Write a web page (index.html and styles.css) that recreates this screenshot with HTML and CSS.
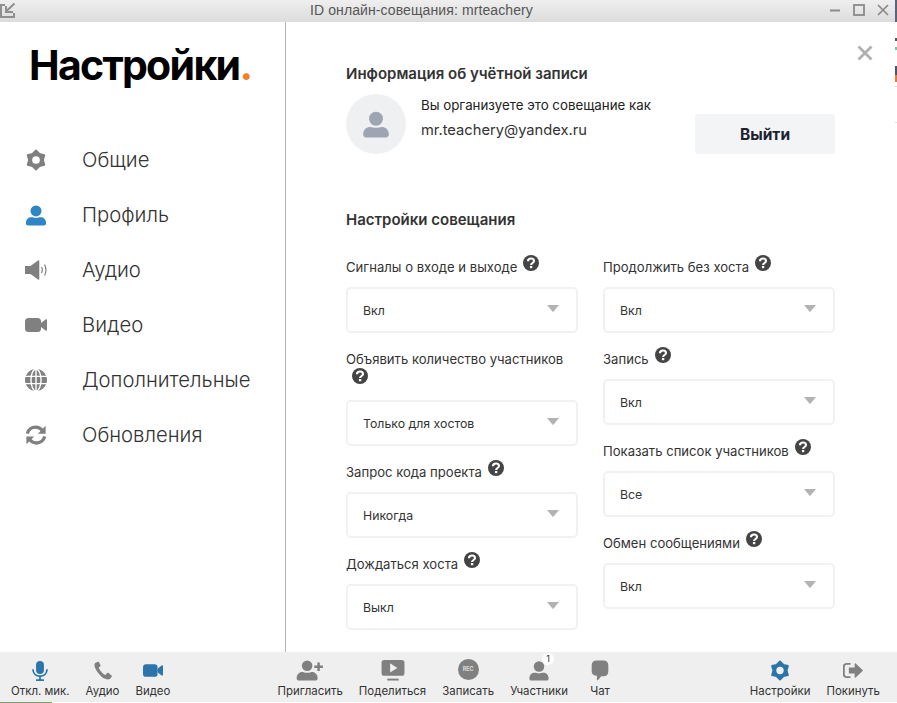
FILE: index.html
```html
<!DOCTYPE html>
<html lang="ru">
<head>
<meta charset="utf-8">
<title>Настройки</title>
<link rel="stylesheet" href="styles.css">
</head>
<body>
<svg class="defs" width="0" height="0" aria-hidden="true">
  <symbol id="i-gear" viewBox="0 0 24 24"><path stroke="currentColor" stroke-width="2" stroke-linejoin="round" fill="currentColor" d="M12 1.500 15.800 5.400 21.090 6.750 19.600 12 21.090 17.250 15.800 18.600 12 22.500 8.200 18.600 2.910 17.250 4.400 12 2.910 6.750 8.200 5.400Z"/><circle cx="12" cy="12" r="4.200" fill="var(--hole,#fff)"/></symbol>
  <symbol id="i-person" viewBox="0 0 24 24"><circle cx="12" cy="7.500" r="6" fill="currentColor"/><path fill="currentColor" d="M1 21c0-4.500 3-6.500 6-6.500 1.500 0 3 .8 5 .8s3.500-.8 5-.8c3 0 6 2 6 6.500 0 1.500-1 2.500-2.500 2.500h-17C2 23.500 1 22.500 1 21Z"/></symbol>
  <symbol id="i-audio" viewBox="0 0 22 20"><path fill="currentColor" d="M0 6h5.500l7.500-5.500c.6-.5 1.300 0 1.300.6v17.800c0 .6-.7 1.100-1.300.6L5.500 14H0Z"/><path fill="none" stroke="currentColor" stroke-width="1.200" d="M16.500 7c1 1.800 1 4.200 0 6M19.500 4.500c1.800 3.300 1.800 7.700 0 11"/></symbol>
  <symbol id="i-video" viewBox="0 0 22 16"><rect x="0" y="1" width="16" height="14" rx="3.500" fill="currentColor"/><path fill="currentColor" d="m16 6 4.500-3.500c.6-.4 1.500-.1 1.500.7v9.600c0 .8-.9 1.100-1.500.7L16 10Z"/></symbol>
  <symbol id="i-globe" viewBox="0 0 24 24"><circle cx="12" cy="12" r="12" fill="currentColor"/><g fill="none" stroke="#fff" stroke-width="1.500"><path d="M0 8h24M0 16h24M12 0v24"/><ellipse cx="12" cy="12" rx="5.500" ry="12"/></g></symbol>
  <symbol id="i-sync" viewBox="0 0 24 24"><g fill="none" stroke="currentColor" stroke-width="3.600"><path d="M2.500 10.500C3.500 6 7.500 3.300 11.500 3.300c3 0 5.500 1.200 7.500 3.700"/><path d="M21.500 13.500c-1 4.500-5 7.200-9 7.200-3 0-5.500-1.200-7.500-3.700"/></g><path fill="currentColor" d="M22.500 2v8.500H14ZM1.500 22v-8.500H10Z"/></symbol>
  <symbol id="i-help" viewBox="0 0 16 16"><circle cx="8" cy="8" r="8" fill="#444"/><path fill="none" stroke="#fff" stroke-width="2.100" d="M5 6.200C5 4.500 6.300 3.500 8 3.500s3 1 3 2.500c0 2-2.900 2-2.900 4"/><rect x="6.900" y="11" width="2.400" height="2.200" fill="#fff"/></symbol>
  <symbol id="i-caret" viewBox="0 0 12 7"><path fill="currentColor" d="M0 0h12L6.600 6.400c-.3.400-.9.400-1.200 0Z"/></symbol>
</svg>

<div class="app">
  <header class="titlebar">
    <svg class="tb-restore" viewBox="0 0 16 16" width="16" height="16"><path fill="none" stroke="#8f8f8f" stroke-width="2" d="M5 3H1v12h13v-4M14.500 1.500 6 9.500M6 4v6h7"/></svg>
    <span class="tb-title">ID онлайн-совещания: mrteachery</span>
    <div class="tb-controls">
      <svg viewBox="0 0 12 12" width="12" height="12"><path stroke="#8a8a8a" stroke-width="2" d="M1 6.500h10"/></svg>
      <svg viewBox="0 0 12 12" width="12" height="12"><rect x="1" y="1" width="10" height="10" fill="none" stroke="#8a8a8a" stroke-width="1.800"/></svg>
      <svg viewBox="0 0 12 12" width="12" height="12"><path stroke="#8a8a8a" stroke-width="1.700" d="M1 1l10 10M11 1 1 11"/></svg>
    </div>
  </header>

  <div class="main">
    <aside class="sidebar">
      <h1 class="heading">Настройки<span class="dot">.</span></h1>
      <nav class="nav">
        <a class="nav-item"><span class="nav-ico"><svg class="ic-20"><use href="#i-gear"/></svg></span>Общие</a>
        <a class="nav-item active"><span class="nav-ico"><svg class="ic-22"><use href="#i-person"/></svg></span>Профиль</a>
        <a class="nav-item"><span class="nav-ico"><svg class="ic-22"><use href="#i-audio"/></svg></span>Аудио</a>
        <a class="nav-item"><span class="nav-ico"><svg class="ic-22"><use href="#i-video"/></svg></span>Видео</a>
        <a class="nav-item"><span class="nav-ico"><svg class="ic-22"><use href="#i-globe"/></svg></span>Дополнительные</a>
        <a class="nav-item"><span class="nav-ico"><svg class="ic-20"><use href="#i-sync"/></svg></span>Обновления</a>
      </nav>
    </aside>

    <section class="content">
      <svg class="close" viewBox="0 0 16 16" width="16" height="16"><path stroke="#b0b0b0" stroke-width="2.800" d="M1.500 1.500l13 13M14.500 1.500l-13 13"/></svg>
      <h2 class="section-title">Информация об учётной записи</h2>
      <div class="account">
        <div class="avatar"><svg class="avatar-ico"><use href="#i-person"/></svg></div>
        <div class="account-text">
          <p class="account-note">Вы организуете это совещание как</p>
          <p class="account-mail">mr.teachery@yandex.ru</p>
        </div>
        <button class="logout">Выйти</button>
      </div>

      <h2 class="section-title meeting-title">Настройки совещания</h2>
      <div class="columns">
        <div class="column">
          <div class="field"><label class="label">Сигналы о входе и выходе<svg class="help"><use href="#i-help"/></svg></label><div class="select"><span>Вкл</span><svg class="caret"><use href="#i-caret"/></svg></div></div>
          <div class="field"><label class="label">Объявить количество участников<svg class="help"><use href="#i-help"/></svg></label><div class="select"><span>Только для хостов</span><svg class="caret"><use href="#i-caret"/></svg></div></div>
          <div class="field"><label class="label">Запрос кода проекта<svg class="help"><use href="#i-help"/></svg></label><div class="select"><span>Никогда</span><svg class="caret"><use href="#i-caret"/></svg></div></div>
          <div class="field"><label class="label">Дождаться хоста<svg class="help"><use href="#i-help"/></svg></label><div class="select"><span>Выкл</span><svg class="caret"><use href="#i-caret"/></svg></div></div>
        </div>
        <div class="column">
          <div class="field"><label class="label">Продолжить без хоста<svg class="help"><use href="#i-help"/></svg></label><div class="select"><span>Вкл</span><svg class="caret"><use href="#i-caret"/></svg></div></div>
          <div class="field"><label class="label">Запись<svg class="help"><use href="#i-help"/></svg></label><div class="select"><span>Вкл</span><svg class="caret"><use href="#i-caret"/></svg></div></div>
          <div class="field"><label class="label">Показать список участников<svg class="help"><use href="#i-help"/></svg></label><div class="select"><span>Все</span><svg class="caret"><use href="#i-caret"/></svg></div></div>
          <div class="field"><label class="label">Обмен сообщениями<svg class="help"><use href="#i-help"/></svg></label><div class="select"><span>Вкл</span><svg class="caret"><use href="#i-caret"/></svg></div></div>
        </div>
      </div>
    </section>
  </div>

  <footer class="toolbar">
    <div class="tool-group">
      <div class="tool blue"><svg class="t-ico" viewBox="0 0 24 24"><rect x="7.500" y="1" width="9" height="15" rx="4.500" fill="currentColor"/><path fill="none" stroke="currentColor" stroke-width="2" d="M4 10.500c0 5 3.500 8 8 8s8-3 8-8M12 18.500V23M7.500 23h9"/></svg><span>Откл. мик.</span></div>
      <div class="tool"><svg class="t-ico" viewBox="0 0 24 24"><path fill="currentColor" d="M6 2 3 3.500C2 4.500 2 6.500 3 9c2.500 5.500 7 10.500 11.500 12.500 2.500 1 4.500 1 5.500 0l2-2.500c.3-.5.200-1-.2-1.300l-3.800-3c-.5-.3-1-.3-1.300.1l-1.700 2c-.3.300-.7.300-1 .1C11 15 8.500 12 7.300 9.300c-.1-.4 0-.7.300-1l1.300-1.300c.3-.3.400-.8.200-1.200L7.300 2.400C7 1.900 6.500 1.800 6 2Z"/></svg><span>Аудио</span></div>
      <div class="tool blue"><svg class="t-ico t-video" viewBox="0 0 22 16"><use href="#i-video"/></svg><span>Видео</span></div>
    </div>
    <div class="tool-group mid">
      <div class="tool"><svg class="t-ico t-invite" viewBox="0 0 28 22"><circle cx="11" cy="6" r="5.500" fill="currentColor"/><path fill="currentColor" d="M0 19c0-4 3-6.500 5.500-6.500 1.500 0 3 .8 5.500.8s4-.8 5.500-.8C19 12.500 22 15 22 19c0 1.500-1 2.500-2.500 2.500h-17C1 21.500 0 20.500 0 19Z"/><path stroke="currentColor" stroke-width="2.600" d="M23 2.500v9M18.500 7h9"/></svg><span>Пригласить</span></div>
      <div class="tool"><svg class="t-ico" viewBox="0 0 24 22"><rect x="0" y="0" width="24" height="16.500" rx="3" fill="currentColor"/><path fill="#efefef" d="M9 3.500 16.500 8.300 9 13Z"/><path stroke="currentColor" stroke-width="2" d="M6 20.500h12"/></svg><span>Поделиться</span></div>
      <div class="tool"><div class="rec">REC</div><span>Записать</span></div>
      <div class="tool"><div class="badge-wrap"><svg class="t-ico" viewBox="0 0 24 24"><use href="#i-person"/></svg><span class="badge">1</span></div><span>Участники</span></div>
      <div class="tool chat"><svg class="t-ico" viewBox="0 0 20 24"><path fill="currentColor" d="M6 .5h8c3.500 0 5.500 2 5.500 5.500v7c0 3.500-2 5.500-5.500 5.500h-2.500l-4 4.500c-.5.500-1 .2-1-.5V18C2.500 17.500.5 16 .5 13V6C.5 2.500 2.500.5 6 .5Z"/></svg><span>Чат</span></div>
    </div>
    <div class="tool-group end">
      <div class="tool blue tool-gear"><svg class="t-ico" viewBox="0 0 24 24"><use href="#i-gear"/></svg><span>Настройки</span></div>
      <div class="tool"><svg class="t-ico t-leave" viewBox="0 0 24 22"><path fill="none" stroke="currentColor" stroke-width="2.200" d="M9 3H4.500C2.500 3 1 4.500 1 6.500v9C1 17.500 2.500 19 4.500 19H9"/><path fill="currentColor" d="M7 7.500h7V3c0-.6.700-.9 1.200-.4L23.500 10.300c.4.400.4 1 0 1.400L15.200 19.400c-.5.500-1.200.2-1.200-.4v-4.500H7Z"/></svg><span>Покинуть</span></div>
    </div>
  </footer>
  <div class="bottom-edge"><span class="edge-green"></span></div>
  <div class="right-edge"></div>
</div>
</body>
</html>
```
FILE: styles.css
```css
* { box-sizing: border-box; }
html, body { margin: 0; padding: 0; background: #fff; }
body { font-family: Inter, "Liberation Sans", sans-serif; color: #222; overflow: hidden; }
.defs { position: absolute; }
.app { position: relative; width: 897px; height: 703px; display: flex; flex-direction: column; overflow: hidden; }

.titlebar { height: 22px; flex: none; display: flex; align-items: center; position: relative; background: linear-gradient(#efefef, #dcdcdc); }
.tb-restore { margin-top: -2px; }
.tb-title { position: absolute; left: 310px; top: 2px; font: 14px/17px "Liberation Sans", sans-serif; letter-spacing: .1px; color: #555; white-space: nowrap; }
.tb-controls { margin-left: auto; margin-right: 8px; display: flex; gap: 12px; margin-top: -2px; }

.main { flex: 1; min-height: 0; display: flex; }
.sidebar { width: 286px; flex: none; border-right: 1px solid #b4b4b4; }
.heading { margin: 18px 0 0 29px; font-size: 41px; line-height: 50px; font-weight: 700; letter-spacing: -1.700px; color: #000; }
.dot { color: #f58220; }
.nav { margin-top: 42px; display: flex; flex-direction: column; }
.nav-item { height: 55px; display: flex; align-items: center; font-size: 20.300px; font-weight: 300; color: #333; }
.nav-ico { width: 82px; padding-left: 25px; flex: none; display: flex; align-items: center; color: #808080; }
.active .nav-ico { color: #2f86c5; }
.ic-20 { width: 22px; height: 22px; }
.ic-22 { width: 22px; height: 22px; }

.content { flex: 1; position: relative; padding: 42px 0 0 60px; }
.close { position: absolute; left: 571px; top: 23px; }
.section-title { margin: 0; font-size: 15px; line-height: 20px; font-weight: 600; color: #333; }
.account { display: flex; align-items: flex-start; margin-top: 10px; }
.avatar { width: 60px; height: 60px; border-radius: 50%; background: #eef0f2; display: flex; align-items: center; justify-content: center; flex: none; }
.avatar-ico { width: 28px; height: 28px; color: #9ea4b2; }
.account-text { margin-left: 15px; width: 274px; }
.account-note { margin: 1px 0 0; font-size: 13.300px; line-height: 20px; color: #222; }
.account-mail { margin: 5px 0 0; font-size: 14.700px; line-height: 20px; color: #333; }
.logout { width: 140px; height: 40px; margin-top: 20px; border: 0; border-radius: 3px; background: #f3f4f6; font: 700 15.500px Inter, sans-serif; color: #1d2230; }
.meeting-title { margin-top: 56px; }

.columns { display: flex; gap: 25px; margin-top: 27px; }
.column { width: 232px; display: flex; flex-direction: column; gap: 16px; }
.label { display: block; font-size: 13.100px; line-height: 21px; color: #333; margin-bottom: 9px; }
.help { width: 16px; height: 16px; margin-left: 6px; position: relative; top: -2px; vertical-align: -1px; }
.select { height: 46px; border: 2px solid #f1f1f4; border-radius: 5px; background: #fff; display: flex; align-items: center; justify-content: space-between; padding: 0 17px 0 15px; font-size: 12.300px; color: #333; }
.caret { width: 12px; height: 7px; color: #b3b3b3; margin-top: -3px; }

.toolbar { height: 50px; flex: none; display: flex; background: #efefef; padding: 0 17px 0 11px; }
.tool-group { display: flex; gap: 16px; }
.mid { margin-left: 107px; }
.end { margin-left: auto; }
.tool { display: flex; flex-direction: column; align-items: center; font-size: 11.450px; line-height: 14px; white-space: nowrap; color: #808080; }
.tool span { color: #333; }
.t-ico { width: 24px; height: 21px; margin-top: 8px; margin-bottom: 3px; display: block; }
.t-invite { width: 28px; }
.t-video { width: 20px; }
.t-leave { width: 20px; }
.blue { color: #2b75ab; }
.tool-gear { --hole: #efefef; }
.rec { width: 21px; height: 21px; margin-top: 7px; margin-bottom: 4px; border-radius: 50%; background: #808080; color: #ddd; font-size: 5.500px; font-weight: 700; line-height: 21px; text-align: center; }
.badge-wrap { position: relative; }
.badge { position: absolute; left: 15px; top: 1px; width: 12px; height: 12px; border-radius: 50%; background: #fff; font-size: 9px; line-height: 12px; text-align: center; }
.chat { margin-left: 4px; }

.bottom-edge { height: 1px; flex: none; background: #fff; }
.edge-green { display: block; width: 52px; height: 1px; background: #7f9f6a; }
.right-edge { position: absolute; right: 0; top: 0; width: 2px; height: 125px; background: linear-gradient(#5a6478 0 22px, #fff 22px 38px, #555 38px 41px, #fff 41px 47px, #7cc796 47px 50px, #fff 50px 66px, #4b5566 66px 75px, #e8763a 75px 82px, #fff 82px 86px, #ddd 86px 87px, #fff 87px 122px, #ddd 122px 123px, #fff 123px); }
```
